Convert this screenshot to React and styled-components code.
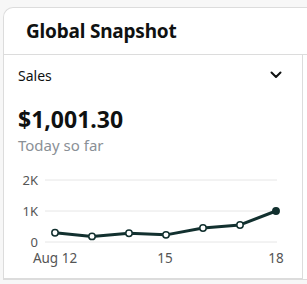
import React from 'react'
import styled, {createGlobalStyle} from 'styled-components'

const GlobalStyle = createGlobalStyle`
  body {
    margin: 0;
    background: #f7f7f7;
    overflow: hidden;
    font-family: "Noto Sans", "Open Sans", sans-serif;
  }
`

const points = [
  {x: 55, v: 0.3},
  {x: 92, v: 0.18},
  {x: 129, v: 0.28},
  {x: 166, v: 0.23},
  {x: 203, v: 0.45},
  {x: 240, v: 0.55},
  {x: 276, v: 1.0},
]

const zeroY = 72
const kY = 31
const yOf = v => zeroY - v * kY

const Chevron = () => (
  <svg width="12" height="8" viewBox="0 0 12 8">
    <path d="M1.5 1.5 L6 6 L10.5 1.5" fill="none" stroke="#0f1111" strokeWidth="2" strokeLinecap="round" strokeLinejoin="round"/>
  </svg>
)

const SalesChart = () => {
  const line = points.map(p => `${p.x - 4},${yOf(p.v)}`).join(' ')
  return (
    <Chart width="299" height="100" viewBox="0 0 299 100">
      {[0, 1, 2].map(i => (
        <g key={i}>
          <line x1="41" x2="273" y1={yOf(i)} y2={yOf(i)} stroke="#e6e6e6" strokeWidth="1"/>
          <text x="34" y={yOf(i) + 4.5} textAnchor="end" fontSize="13" fill="#555">{i === 0 ? '0' : `${i}K`}</text>
        </g>
      ))}
      <polyline points={line} fill="none" stroke="#12302f" strokeWidth="3" strokeLinejoin="round"/>
      {points.map((p, i) => (
        <circle key={i} cx={p.x - 4} cy={yOf(p.v)} r="3.2"
          fill={i === points.length - 1 ? '#12302f' : '#fff'} stroke="#12302f" strokeWidth="1.5"/>
      ))}
      <text x="51" y="93" textAnchor="middle" fontSize="13.5" fill="#555">Aug 12</text>
      <text x="161" y="93" textAnchor="middle" fontSize="13.5" fill="#555">15</text>
      <text x="272" y="93" textAnchor="middle" fontSize="13.5" fill="#555">18</text>
    </Chart>
  )
}

export default function App() {
  return (
    <>
      <GlobalStyle/>
      <Card>
        <Header>Global Snapshot</Header>
        <Panels>
          <Panel>
            <PanelTop>
              <Label>Sales</Label>
              <Chevron/>
            </PanelTop>
            <Amount>$1,001.30</Amount>
            <Caption>Today so far</Caption>
            <SalesChart/>
          </Panel>
        </Panels>
      </Card>
    </>
  )
}

const Card = styled.div`
  margin: 7px 0 0 3px;
  width: 303px;
  background: #fff;
  border: 1px solid #dcdcdc;
  border-right: none;
  border-radius: 10px 0 0 0;
`

const Header = styled.div`
  height: 46px;
  display: flex;
  align-items: center;
  padding-left: 22px;
  font-size: 19px;
  font-weight: 700;
  color: #0f1111;
  letter-spacing: -0.2px;
  border-bottom: 1px solid #dcdcdc;
`

const Panels = styled.div`
  display: flex;
`

const Panel = styled.div`
  width: 298px;
  height: 223px;
  border-right: 1px solid #dcdcdc;
  border-bottom: 1px solid #dcdcdc;
  display: flex;
  flex-direction: column;
`

const PanelTop = styled.div`
  display: flex;
  align-items: center;
  justify-content: space-between;
  padding: 9px 20px 0 14px;
  height: 22px;
`

const Label = styled.span`
  font-size: 14px;
  color: #0f1111;
`

const Amount = styled.div`
  margin: 18px 0 0 14px;
  font-size: 23px;
  font-weight: 700;
  color: #0f1111;
  line-height: 30px;
`

const Caption = styled.div`
  margin: 0 0 0 14px;
  font-size: 15px;
  color: #8a9096;
  line-height: 22px;
`

const Chart = styled.svg`
  display: block;
  margin-top: 14px;
  font-family: "Noto Sans", "Open Sans", sans-serif;
`
